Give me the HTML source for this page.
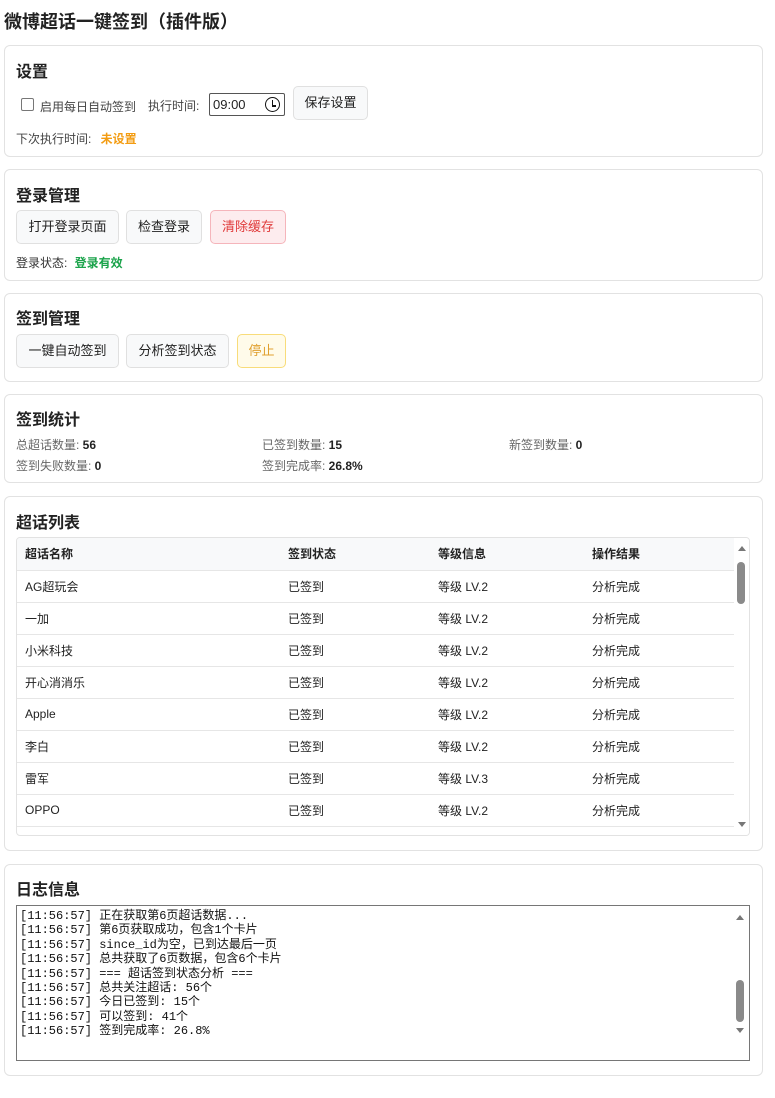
<!DOCTYPE html>
<html><head><meta charset="utf-8"><style>
*{box-sizing:border-box}
body{margin:0;width:775px;height:1098px;background:#fff;font-family:"Liberation Sans","Noto Sans CJK SC",sans-serif;color:#222;position:relative;overflow:hidden}
.t{position:absolute;left:4px;top:8px;font-size:18px;font-weight:bold;margin:0;color:#222}
.card{position:absolute;left:4px;width:759px;border:1px solid #e2e2e2;border-radius:6px;background:#fff}
h3{position:absolute;left:11px;margin:0;font-size:16px;font-weight:bold;color:#222}
.btn{position:absolute;height:34px;border:1px solid #e0e0e0;border-radius:5px;background:#f8f9fa;font-size:13px;line-height:32px;text-align:center;color:#222}
.s{position:absolute;font-size:12px;color:#666}
.s b{color:#222}
table{border-collapse:collapse;width:719px;font-size:12px}
td,th{height:32px;padding:0 8px;text-align:left;border-bottom:1px solid #e6e6e6}
th{background:#f8f9fa;font-weight:bold}
.log{position:absolute;left:11px;top:40px;width:734px;height:156px;border:1px solid #767676;font-family:"Liberation Mono","WenQuanYi Zen Hei",monospace;font-size:12px;line-height:14.4px;padding:3px 3px;white-space:pre;color:#111}
</style></head><body>
<h1 class="t">微博超话一键签到（插件版）</h1>

<div class="card" style="top:45px;height:112px">
<h3 style="top:12px">设置</h3>
<div style="position:absolute;left:16px;top:52px;width:13px;height:13px;border:1px solid #777;border-radius:2px"></div>
<div class="s" style="left:35px;top:52px;color:#444">启用每日自动签到</div>
<div class="s" style="left:143px;top:51px;color:#444">执行时间:</div>
<div style="position:absolute;left:204px;top:47px;width:76px;height:23px;border:1px solid #555;border-radius:2px;font-size:13px;padding:3px 0 0 3px">09:00<span style="position:absolute;right:4px;top:3px;width:15px;height:15px;border:1.5px solid #111;border-radius:50%"></span><span style="position:absolute;right:11px;top:6px;width:1.5px;height:6px;background:#111"></span><span style="position:absolute;right:8px;top:11px;width:4px;height:1.5px;background:#111"></span></div>
<div class="btn" style="left:288px;top:40px;width:75px">保存设置</div>
<div class="s" style="left:11px;top:84px;color:#444">下次执行时间: <b style="color:#f39c12;margin-left:6px">未设置</b></div>
</div>

<div class="card" style="top:169px;height:112px">
<h3 style="top:12px">登录管理</h3>
<div class="btn" style="left:11px;top:40px;width:103px">打开登录页面</div>
<div class="btn" style="left:121px;top:40px;width:76px">检查登录</div>
<div class="btn" style="left:205px;top:40px;width:76px;background:#fdecee;border-color:#f5b5bb;color:#e03a3a">清除缓存</div>
<div class="s" style="left:11px;top:84px;color:#333">登录状态: <b style="color:#1aa34a;margin-left:4px">登录有效</b></div>
</div>

<div class="card" style="top:293px;height:89px">
<h3 style="top:11px">签到管理</h3>
<div class="btn" style="left:11px;top:40px;width:103px">一键自动签到</div>
<div class="btn" style="left:121px;top:40px;width:103px">分析签到状态</div>
<div class="btn" style="left:232px;top:40px;width:49px;background:#fffbea;border-color:#f8dc7a;color:#e0a030">停止</div>
</div>

<div class="card" style="top:394px;height:89px">
<h3 style="top:11px">签到统计</h3>
<div class="s" style="left:11px;top:41px">总超话数量: <b>56</b></div>
<div class="s" style="left:257px;top:41px">已签到数量: <b>15</b></div>
<div class="s" style="left:504px;top:41px">新签到数量: <b>0</b></div>
<div class="s" style="left:11px;top:62px">签到失败数量: <b>0</b></div>
<div class="s" style="left:257px;top:62px">签到完成率: <b>26.8%</b></div>
</div>

<div class="card" style="top:496px;height:355px">
<h3 style="top:12px">超话列表</h3>
<div style="position:absolute;left:11px;top:40px;width:734px;height:299px;border:1px solid #e2e2e2;border-radius:4px;overflow:hidden">
<table>
<tr><th style="width:263px">超话名称</th><th style="width:150px">签到状态</th><th style="width:154px">等级信息</th><th>操作结果</th></tr>
<tr><td>AG超玩会</td><td>已签到</td><td>等级 LV.2</td><td>分析完成</td></tr>
<tr><td>一加</td><td>已签到</td><td>等级 LV.2</td><td>分析完成</td></tr>
<tr><td>小米科技</td><td>已签到</td><td>等级 LV.2</td><td>分析完成</td></tr>
<tr><td>开心消消乐</td><td>已签到</td><td>等级 LV.2</td><td>分析完成</td></tr>
<tr><td>Apple</td><td>已签到</td><td>等级 LV.2</td><td>分析完成</td></tr>
<tr><td>李白</td><td>已签到</td><td>等级 LV.2</td><td>分析完成</td></tr>
<tr><td>雷军</td><td>已签到</td><td>等级 LV.3</td><td>分析完成</td></tr>
<tr><td>OPPO</td><td>已签到</td><td>等级 LV.2</td><td>分析完成</td></tr>
<tr><td>小米澎湃</td><td>已签到</td><td>等级 LV.2</td><td>分析完成</td></tr>
</table>
<div style="position:absolute;right:0;top:0;width:15px;height:299px;background:#fff"></div>
<div style="position:absolute;right:4px;top:24px;width:8px;height:42px;background:#8a8a8a;border-radius:4px"></div>
<div style="position:absolute;right:3px;top:8px;border:4px solid transparent;border-bottom:5px solid #777;border-top:0"></div>
<div style="position:absolute;right:3px;bottom:8px;border:4px solid transparent;border-top:5px solid #777;border-bottom:0"></div>
</div>
</div>

<div class="card" style="top:864px;height:212px">
<h3 style="top:11px">日志信息</h3>
<div class="log">[11:56:57] 正在获取第6页超话数据...
[11:56:57] 第6页获取成功，包含1个卡片
[11:56:57] since_id为空，已到达最后一页
[11:56:57] 总共获取了6页数据，包含6个卡片
[11:56:57] === 超话签到状态分析 ===
[11:56:57] 总共关注超话: 56个
[11:56:57] 今日已签到: 15个
[11:56:57] 可以签到: 41个
[11:56:57] 签到完成率: 26.8%</div>
<div style="position:absolute;left:731px;top:115px;width:8px;height:42px;background:#8a8a8a;border-radius:4px"></div>
<div style="position:absolute;left:731px;top:50px;border:4px solid transparent;border-bottom:5px solid #777;border-top:0"></div>
<div style="position:absolute;left:731px;top:163px;border:4px solid transparent;border-top:5px solid #777;border-bottom:0"></div>
</div>
</body></html>
